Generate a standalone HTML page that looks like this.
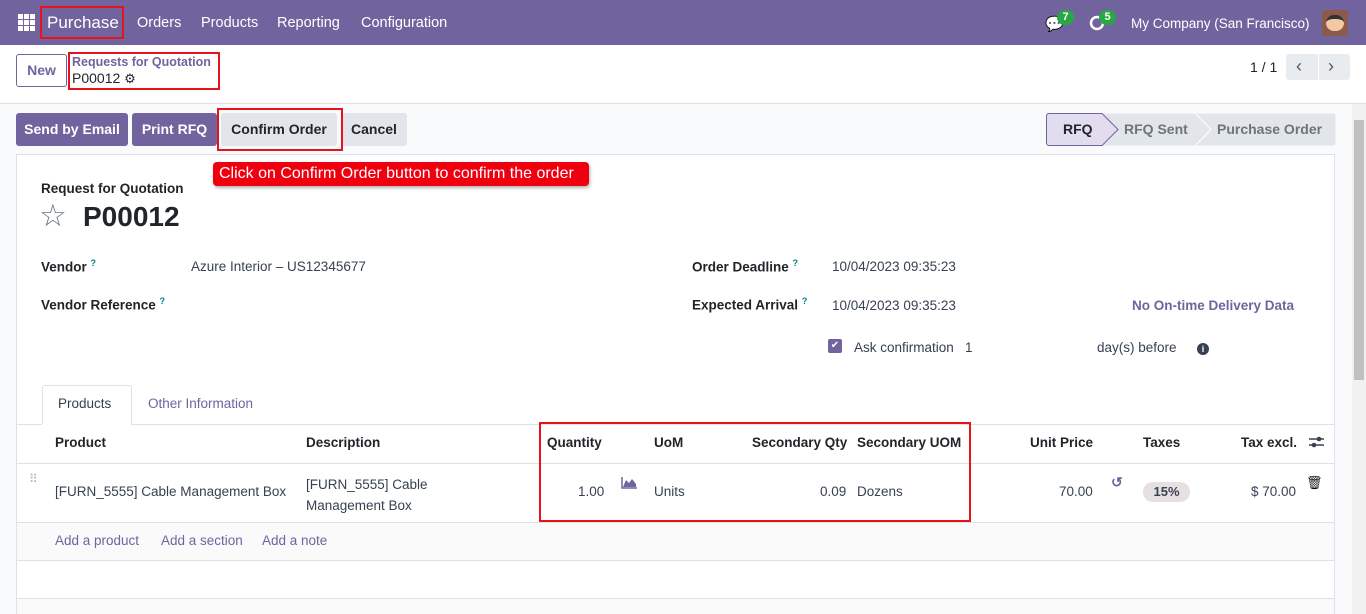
<!DOCTYPE html>
<html style="width:1366px;height:614px;overflow:hidden"><head><meta charset="utf-8"><style>
*{box-sizing:border-box;margin:0;padding:0}
body{width:1366px;height:614px;overflow:hidden;font-family:"Liberation Sans",sans-serif;font-size:13.5px;color:#374151;background:#f9fafb;position:relative}
.a{position:absolute;white-space:nowrap}
.nav{position:absolute;left:0;top:0;width:1366px;height:45px;background:#71639e;color:#fff}
.nav .a{font-size:14.5px;top:15px}
.b{font-weight:bold;color:#212529}
.btnp{position:absolute;top:113px;height:33px;background:#71639e;color:#fff;font-weight:bold;border-radius:3px;text-align:center;line-height:33px;font-size:14px}
.btng{position:absolute;top:113px;height:33px;background:#e2e5ea;color:#212529;font-weight:bold;border-radius:3px;text-align:center;line-height:33px;font-size:14px}
.red{position:absolute;border:2px solid #e8121a}
.hl{position:absolute;left:17px;width:1317px;height:1px;background:#dee2e6}
.pur{color:#71639e}
</style></head><body>
<div class="nav">
  <svg class="a" style="left:18px;top:14px" width="17" height="17" viewBox="0 0 17 17" fill="#fff"><rect x="0" y="0" width="5" height="5"/><rect x="6" y="0" width="5" height="5"/><rect x="12" y="0" width="5" height="5"/><rect x="0" y="6" width="5" height="5"/><rect x="6" y="6" width="5" height="5"/><rect x="12" y="6" width="5" height="5"/><rect x="0" y="12" width="5" height="5"/><rect x="6" y="12" width="5" height="5"/><rect x="12" y="12" width="5" height="5"/></svg>
  <div class="a" style="left:47px;top:13px;font-size:17px">Purchase</div>
  <div class="a" style="left:137px">Orders</div>
  <div class="a" style="left:201px">Products</div>
  <div class="a" style="left:277px">Reporting</div>
  <div class="a" style="left:361px">Configuration</div>
  <div class="a" style="left:1045px;top:15px;font-size:15px">💬</div>
  <div class="a" style="left:1057px;top:10px;width:17px;height:15px;border-radius:8px;background:#28a745;font-size:11px;text-align:center;line-height:15px;font-weight:bold">7</div>
  <svg class="a" style="left:1089px;top:15px" width="16" height="16" viewBox="0 0 16 16"><circle cx="8" cy="8" r="6" fill="none" stroke="#fff" stroke-width="2.5"/></svg>
  <div class="a" style="left:1099px;top:10px;width:17px;height:15px;border-radius:8px;background:#28a745;font-size:11px;text-align:center;line-height:15px;font-weight:bold">5</div>
  <div class="a" style="left:1131px;font-size:13.5px!important;top:16px">My Company (San Francisco)</div>
  <div class="a" style="left:1322px;top:10px;width:26px;height:26px;border-radius:3px;background:#8b5a4a"><div style="margin:5px 4px;width:18px;height:16px;border-radius:8px;background:#f1c9a5;border-top:4px solid #333"></div></div>
</div>
<div class="a" style="left:0;top:45px;width:1366px;height:59px;background:#fff;border-bottom:1px solid #dee2e6"></div>
<div class="a" style="left:16px;top:54px;width:51px;height:33px;border:1px solid #71639e;border-radius:3px;color:#71639e;font-weight:bold;text-align:center;line-height:31px;font-size:14px">New</div>
<div class="a pur" style="left:72px;top:55px;font-size:12.5px;font-weight:bold">Requests for Quotation</div>
<div class="a" style="left:72px;top:70px;font-size:14px;color:#212529">P00012 <span style="font-size:13px">⚙</span></div>
<div class="red" style="left:68px;top:52px;width:152px;height:38px"></div>
<div class="red" style="left:40px;top:6px;width:84px;height:33px"></div>
<div class="a" style="left:1250px;top:59px;font-size:14px;color:#212529">1 / 1</div>
<div class="a" style="left:1286px;top:54px;width:64px;height:26px;background:#e9ecef;border-radius:3px;color:#555;font-size:18px;line-height:24px"><span style="position:absolute;left:10px">‹</span><span style="position:absolute;left:32px;top:0;width:1px;height:26px;background:#fff"></span><span style="position:absolute;left:42px">›</span></div>

<div class="btnp" style="left:16px;width:112px">Send by Email</div>
<div class="btnp" style="left:132px;width:85px">Print RFQ</div>
<div class="btng" style="left:221px;width:116px">Confirm Order</div>
<div class="btng" style="left:341px;width:66px">Cancel</div>
<div class="red" style="left:217px;top:108px;width:126px;height:43px"></div>

<svg class="a" style="left:1046px;top:113px" width="290" height="33" viewBox="0 0 290 33">
<path d="M3 0.5H287a2.5 2.5 0 0 1 2.5 2.5V30a2.5 2.5 0 0 1-2.5 2.5H3A2.5 2.5 0 0 1 .5 30V3A2.5 2.5 0 0 1 3 .5z" fill="#e2e5ea"/>
<path d="M3 0.5H56L72 16.5L56 32.5H3A2.5 2.5 0 0 1 .5 30V3A2.5 2.5 0 0 1 3 .5z" fill="#e2dcef" stroke="#71639e"/>
<path d="M149 0L165 16.5L149 33" fill="none" stroke="#fff"/>
<text x="17" y="21" font-family="Liberation Sans" font-size="14" font-weight="bold" fill="#212529">RFQ</text>
<text x="78" y="21" font-family="Liberation Sans" font-size="14" font-weight="bold" fill="#6c757d">RFQ Sent</text>
<text x="171" y="21" font-family="Liberation Sans" font-size="14" font-weight="bold" fill="#6c757d">Purchase Order</text>
</svg>
<div class="a" style="left:1352px;top:104px;width:14px;height:510px;background:#f1f1f1"><div style="margin:16px 2px;width:10px;height:260px;background:#c1c1c1"></div></div>

<div class="a" style="left:16px;top:154px;width:1319px;height:460px;background:#fff;border:1px solid #dee2e6;border-bottom:none"></div>
<div class="a" style="left:213px;top:162px;width:376px;height:24px;background:#f0000f;border-radius:4px;color:#fff;font-size:16px;line-height:24px;padding-left:6px;box-shadow:1px 2px 3px rgba(0,0,0,.3)">Click on Confirm Order button to confirm the order</div>
<div class="a b" style="left:41px;top:181px;font-size:13.5px">Request for Quotation</div>
<div class="a" style="left:39px;top:198px;font-size:31px;color:#6c757d">☆</div>
<div class="a b" style="left:83px;top:201px;font-size:28px">P00012</div>

<div class="a b" style="left:41px;top:258px">Vendor <sup style="color:#017e84;font-size:9px">?</sup></div>
<div class="a" style="left:191px;top:259px">Azure Interior – US12345677</div>
<div class="a b" style="left:41px;top:296px">Vendor Reference <sup style="color:#017e84;font-size:9px">?</sup></div>
<div class="a b" style="left:692px;top:258px">Order Deadline <sup style="color:#017e84;font-size:9px">?</sup></div>
<div class="a" style="left:832px;top:259px">10/04/2023 09:35:23</div>
<div class="a b" style="left:692px;top:296px">Expected Arrival <sup style="color:#017e84;font-size:9px">?</sup></div>
<div class="a" style="left:832px;top:298px">10/04/2023 09:35:23</div>
<div class="a pur" style="left:1132px;top:298px;font-weight:bold">No On-time Delivery Data</div>
<div class="a" style="left:828px;top:339px;width:14px;height:14px;background:#71639e;border-radius:2px;color:#fff;font-size:10px;text-align:center;line-height:14px">✔</div>
<div class="a" style="left:854px;top:340px">Ask confirmation&nbsp;&nbsp; 1</div>
<div class="a" style="left:1097px;top:340px">day(s) before</div>
<div class="a" style="left:1197px;top:343px;width:12px;height:12px;border-radius:6px;background:#374151;color:#fff;font-size:9px;text-align:center;line-height:12px;font-weight:bold">i</div>

<div class="a" style="left:42px;top:385px;width:90px;height:40px;background:#fff;border:1px solid #dee2e6;border-bottom:none;border-radius:3px 3px 0 0"></div>
<div class="a" style="left:58px;top:396px">Products</div>
<div class="a pur" style="left:148px;top:396px">Other Information</div>
<div class="hl" style="top:424px"></div>
<div class="a" style="left:42px;top:424px;width:89px;height:2px;background:#fff"></div>

<div class="a b" style="left:55px;top:435px">Product</div>
<div class="a b" style="left:306px;top:435px">Description</div>
<div class="a b" style="left:547px;top:435px">Quantity</div>
<div class="a b" style="left:654px;top:435px">UoM</div>
<div class="a b" style="left:752px;top:435px">Secondary Qty</div>
<div class="a b" style="left:857px;top:435px">Secondary UOM</div>
<div class="a b" style="left:1030px;top:435px">Unit Price</div>
<div class="a b" style="left:1143px;top:435px">Taxes</div>
<div class="a b" style="left:1241px;top:435px">Tax excl.</div>
<svg class="a" style="left:1309px;top:435px" width="15" height="14" viewBox="0 0 15 14"><path d="M0 4H15M0 10H15" stroke="#374151" stroke-width="1.5"/><circle cx="10" cy="4" r="2.3" fill="#374151"/><circle cx="5" cy="10" r="2.3" fill="#374151"/></svg>
<div class="hl" style="top:463px"></div>

<div class="a" style="left:29px;top:476px;color:#adb5bd;font-size:12px;line-height:6px">⠿</div>
<div class="a" style="left:55px;top:484px">[FURN_5555] Cable Management Box</div>
<div class="a" style="left:306px;top:474px;line-height:21px">[FURN_5555] Cable<br>Management Box</div>
<div class="a" style="left:578px;top:484px">1.00</div>
<svg class="a" style="left:621px;top:477px" width="16" height="12" viewBox="0 0 16 12"><path d="M1 0V11H16" stroke="#71639e" fill="none" stroke-width="1.5"/><path d="M2 10L5 3L8 6L11 2L15 7V10Z" fill="#71639e"/></svg>
<div class="a" style="left:654px;top:484px">Units</div>
<div class="a" style="left:820px;top:484px">0.09</div>
<div class="a" style="left:857px;top:484px">Dozens</div>
<div class="a" style="left:1059px;top:484px">70.00</div>
<div class="a pur" style="left:1111px;top:474px;font-size:14px;font-weight:bold">↺</div>
<div class="a" style="left:1143px;top:482px;width:47px;height:20px;background:#e7e0e0;border-radius:10px;font-weight:bold;text-align:center;line-height:20px;font-size:13px">15%</div>
<div class="a" style="left:1251px;top:484px">$ 70.00</div>
<div class="a" style="left:1306px;top:475px;font-size:13px;color:#111">🗑</div>
<div class="red" style="left:539px;top:422px;width:432px;height:100px"></div>
<div class="hl" style="top:522px"></div>
<div class="a" style="left:17px;top:523px;width:1317px;height:37px;background:#fafafb"></div>
<div class="a pur" style="left:55px;top:533px">Add a product</div>
<div class="a pur" style="left:161px;top:533px">Add a section</div>
<div class="a pur" style="left:262px;top:533px">Add a note</div>
<div class="hl" style="top:560px"></div>
<div class="hl" style="top:598px"></div>
<div class="a" style="left:17px;top:599px;width:1317px;height:15px;background:#fafafb"></div>
</body></html>
